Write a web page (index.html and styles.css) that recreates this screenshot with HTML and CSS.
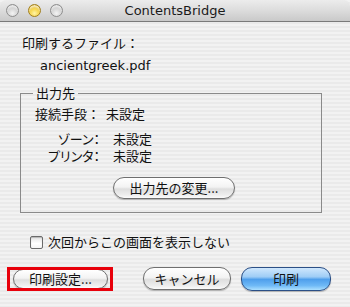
FILE: index.html
```html
<!DOCTYPE html>
<html lang="ja">
<head>
<meta charset="utf-8">
<title>ContentsBridge</title>
<link rel="stylesheet" href="styles.css">
</head>
<body>
<div class="window">
  <div class="titlebar">
    <div class="lights">
      <span class="light"></span>
      <span class="light light-min"></span>
      <span class="light"></span>
    </div>
    <div class="title">ContentsBridge</div>
    <div></div>
  </div>
  <div class="content">
    <div class="label-line">印刷するファイル：</div>
    <div class="file-line">ancientgreek.pdf</div>
    <div class="group">
      <div class="group-head"><span class="group-legend">出力先</span></div>
      <div class="group-body">
        <div class="rows">
          <div class="row row-first"><span class="k">接続手段：</span><span class="v v-tight">未設定</span></div>
          <div class="row row-second"><span class="k k-prop">ゾーン：</span><span class="v">未設定</span></div>
          <div class="row"><span class="k k-prop">プリンタ：</span><span class="v">未設定</span></div>
        </div>
        <div class="change-wrap"><button class="btn btn-change">出力先の変更...</button></div>
      </div>
    </div>
    <label class="check-row"><span class="checkbox"></span><span>次回からこの画面を表示しない</span></label>
    <div class="buttons">
      <div class="highlight"><button class="btn btn-setup">印刷設定...</button></div>
      <div class="right-buttons">
        <button class="btn btn-cancel">キャンセル</button>
        <button class="btn btn-print">印刷</button>
      </div>
    </div>
  </div>
</div>
</body>
</html>
```
FILE: styles.css
```css
* { box-sizing: border-box; }
html, body { margin: 0; padding: 0; }
body {
  width: 350px;
  height: 307px;
  overflow: hidden;
  font-family: "Noto Sans CJK JP", "Noto Sans", sans-serif;
  font-size: 13px;
  color: #111;
}
.window {
  width: 350px;
  height: 307px;
  background: repeating-linear-gradient(to bottom, #f2f2f2 0px, #f2f2f2 2px, #eaeaea 2px, #eaeaea 4px);
}
.titlebar {
  height: 22px;
  display: grid;
  grid-template-columns: 1fr auto 1fr;
  align-items: center;
  background: linear-gradient(to bottom, #ececec 0%, #dcdcdc 50%, #c9c9c9 100%);
  border-bottom: 1px solid #7a7a7a;
  border-radius: 6px 6px 0 0;
}
.lights {
  display: flex;
  gap: 9px;
  padding-left: 6px;
}
.light {
  width: 13px;
  height: 13px;
  border-radius: 50%;
  border: 1px solid #8e8e8e;
  background: radial-gradient(circle at 50% 75%, #f4f4f4 0%, #d6d6d6 45%, #a9a9a9 100%);
  box-shadow: inset 0 2px 2px rgba(255,255,255,0.7);
}
.light-min {
  border-color: #a27f1b;
  background: radial-gradient(circle at 50% 75%, #fff4a8 0%, #f6d54a 45%, #c99a14 100%);
}
.title {
  font-family: "DejaVu Sans", sans-serif;
  font-size: 13px;
  color: #1a1a1a;
  line-height: 16px;
}
.content {
  padding: 13px 28px 0 20px;
}
.label-line {
  line-height: 16px;
  padding-left: 2px;
}
.file-line {
  line-height: 16px;
  margin-top: 7px;
  padding-left: 20px;
  font-family: "DejaVu Sans", sans-serif;
  font-size: 13px;
}
.group {
  margin-top: 11px;
}
.group-head {
  display: flex;
  height: 16px;
}
.group-head::before,
.group-head::after {
  content: "";
  margin-top: 8px;
  border-top: 1px solid #8a8a8a;
}
.group-head::before {
  width: 12px;
  border-left: 1px solid #8a8a8a;
}
.group-head::after {
  flex: 1;
  border-right: 1px solid #8a8a8a;
}
.group-legend {
  padding: 0 3px;
  line-height: 16px;
}
.group-body {
  border: 1px solid #8a8a8a;
  border-top: none;
  padding: 5px 0 13px 14px;
}
.rows {
  display: grid;
  grid-template-columns: max-content max-content;
  column-gap: 13px;
}
.row { display: contents; }
.k { text-align: right; line-height: 16px; }
.k-prop { font-feature-settings: "palt"; }
.v { line-height: 16px; }
.v-tight { margin-left: -7px; }
.row-first .k, .row-first .v { margin-bottom: 9px; }
.row-second .k, .row-second .v { margin-bottom: 1px; }
.change-wrap {
  display: flex;
  justify-content: center;
  padding-right: 8px;
  margin-top: 13px;
}
.btn {
  font-family: "Noto Sans CJK JP", sans-serif;
  font-size: 13px;
  color: #111;
  height: 22px;
  padding: 0;
  border-radius: 11px;
  border: 1px solid #6f6f6f;
  background: linear-gradient(to bottom, #ffffff 0%, #f3f3f3 45%, #dedede 55%, #eeeeee 85%, #fbfbfb 100%);
  box-shadow: 0 1px 1px rgba(0,0,0,0.25);
  line-height: 20px;
}
.btn-change { width: 122px; }
.check-row {
  display: flex;
  align-items: center;
  gap: 5px;
  margin: 21px 0 0 10px;
  line-height: 16px;
}
.checkbox {
  width: 13px;
  height: 13px;
  border: 1px solid #6a6a6a;
  border-radius: 2px;
  background: linear-gradient(to bottom, #e4e4e4 0%, #ffffff 60%, #f4f4f4 100%);
  box-shadow: inset 0 1px 1px rgba(0,0,0,0.2);
}
.buttons {
  display: flex;
  align-items: center;
  justify-content: space-between;
  margin: 17px 0 0 -13px;
}
.highlight {
  width: 106px;
  height: 24px;
  border: 3px solid #e8000b;
  padding: 0 2px 0 3px;
  display: flex;
  align-items: center;
  overflow: hidden;
}
.btn-setup { width: 95px; height: 20px; line-height: 18px; }
.right-buttons {
  display: flex;
  gap: 10px;
  margin-right: -9px;
}
.btn-cancel { width: 88px; height: 23px; }
.btn-print {
  width: 90px;
  height: 24px;
  border-color: #2b4f86;
  background: linear-gradient(to bottom, #cfe7fd 0%, #9fcdf6 40%, #4f9fec 52%, #6fb9f6 80%, #ace0ff 100%);
}
```
